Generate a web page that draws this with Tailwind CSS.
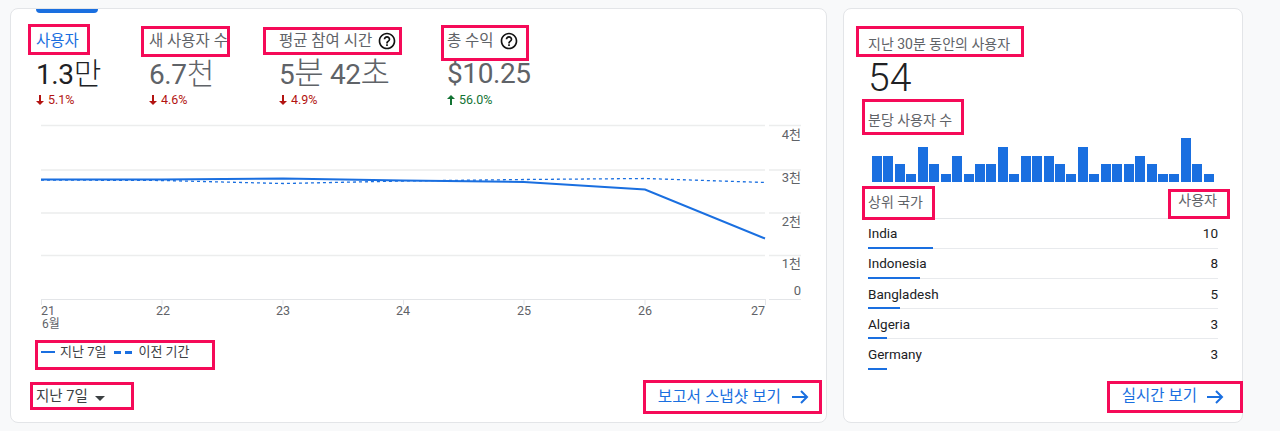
<!DOCTYPE html>
<html lang="ko">
<head>
  <meta charset="UTF-8">
  <meta name="viewport" content="width=device-width, initial-scale=1.0">
  <title>Analytics</title>
  <script src="https://cdn.jsdelivr.net/npm/@tailwindcss/browser@4"></script>
</head>
<body class="relative w-[1280px] h-[431px] overflow-hidden bg-[#f8f9fa] text-[#5f6368] font-['Roboto','Noto_Sans_CJK_KR',sans-serif]">
  <div class="flex items-start gap-4 pl-[10px] pt-2">

    <!-- Overview card -->
    <section class="relative w-[817px] h-[415px] bg-white border border-[#e3e5e8] rounded-lg">
      <div class="absolute left-[25px] top-0 w-[62px] h-1 bg-[#1a6fe0] rounded-b"></div>

      <!-- Metrics -->
      <div class="flex pl-[25px] pt-[22px]">
        <div class="w-[113px]">
          <div class="h-5 text-[15.5px] leading-5 text-[#1a6fe0]">사용자</div>
          <div class="h-[41px] pt-[2px] text-[28px] leading-[41px] tracking-[-0.4px] text-[#202124]">1.3<span class="text-[30px] font-light">만</span></div>
          <div class="flex items-center gap-1 text-[12.5px] leading-4 text-[#b31412]">
            <svg class="w-2 h-[10px]" viewBox="0 0 8 10"><path d="M3 0h2v6h3l-4 4-4-4h3z" fill="#b31412"/></svg>5.1%
          </div>
        </div>
        <div class="w-[130px]">
          <div class="h-5 text-[15.5px] leading-5">새 사용자 수</div>
          <div class="h-[41px] pt-[2px] text-[28px] leading-[41px] tracking-[-0.4px]">6.7<span class="text-[30px] font-light">천</span></div>
          <div class="flex items-center gap-1 text-[12.5px] leading-4 text-[#b31412]">
            <svg class="w-2 h-[10px]" viewBox="0 0 8 10"><path d="M3 0h2v6h3l-4 4-4-4h3z" fill="#b31412"/></svg>4.6%
          </div>
        </div>
        <div class="w-[168px]">
          <div class="flex items-center gap-[5px] h-5 text-[15.5px] leading-5">평균 참여 시간
            <svg class="w-5 h-5" viewBox="0 0 24 24"><path d="M11 18h2v-2h-2v2zm1-16C6.48 2 2 6.48 2 12s4.48 10 10 10 10-4.48 10-10S17.52 2 12 2zm0 18c-4.41 0-8-3.59-8-8s3.59-8 8-8 8 3.59 8 8-3.59 8-8 8zm0-14c-2.21 0-4 1.79-4 4h2c0-1.1.9-2 2-2s2 .9 2 2c0 2-3 1.75-3 5h2c0-2.25 3-2.5 3-5 0-2.21-1.79-4-4-4z" fill="#111"/></svg>
          </div>
          <div class="h-[41px] pt-[2px] text-[28px] leading-[41px] tracking-[-0.4px]">5<span class="text-[32px] font-light">분</span> 42<span class="text-[32px] font-light">초</span></div>
          <div class="flex items-center gap-1 text-[12.5px] leading-4 text-[#b31412]">
            <svg class="w-2 h-[10px]" viewBox="0 0 8 10"><path d="M3 0h2v6h3l-4 4-4-4h3z" fill="#b31412"/></svg>4.9%
          </div>
        </div>
        <div>
          <div class="flex items-center gap-[5px] h-5 text-[15.5px] leading-5">총 수익
            <svg class="w-5 h-5" viewBox="0 0 24 24"><path d="M11 18h2v-2h-2v2zm1-16C6.48 2 2 6.48 2 12s4.48 10 10 10 10-4.48 10-10S17.52 2 12 2zm0 18c-4.41 0-8-3.59-8-8s3.59-8 8-8 8 3.59 8 8-3.59 8-8 8zm0-14c-2.21 0-4 1.79-4 4h2c0-1.1.9-2 2-2s2 .9 2 2c0 2-3 1.75-3 5h2c0-2.25 3-2.5 3-5 0-2.21-1.79-4-4-4z" fill="#111"/></svg>
          </div>
          <div class="h-[41px] pt-[2px] text-[28px] leading-[41px] tracking-[-0.4px]">$10.25</div>
          <div class="flex items-center gap-1 text-[12.5px] leading-4 text-[#137333]">
            <svg class="w-2 h-[10px]" viewBox="0 0 8 10"><path d="M3 10h2V4h3L4 0 0 4h3z" fill="#137333"/></svg>56.0%
          </div>
        </div>
      </div>

      <!-- Chart: viewBox uses page coordinates -->
      <svg class="block mt-[12px]" width="815" height="212" viewBox="11 120 815 212" font-family="Roboto, 'Noto Sans CJK KR', sans-serif">
        <g stroke="#eceded" stroke-width="1.5" fill="none">
          <path d="M41 125.500H765M769 125.500H801"/>
          <path d="M41 170H765M769 170H801"/>
          <path d="M41 213H765M769 213H801"/>
          <path d="M41 255.500H765M769 255.500H801"/>
        </g>
        <path d="M41 299.500H765M769 299.500H801M41.500 299v6M162 299v6M283 299v6M403.500 299v6M524 299v6M645 299v6M765.500 299v6" stroke="#e3e5e8" fill="none"/>
        <path d="M41 180 L162 180.500 L283 183.500 L403 181 L524 179.500 L645 178.500 L765 182.500" stroke="#1a6fe0" stroke-width="1.300" stroke-dasharray="3 3" fill="none"/>
        <path d="M41 179.500 L162 179.500 L283 178.500 L403 180.500 L524 182 L645 189.500 L765 238.500" stroke="#1a6fe0" stroke-width="2" fill="none"/>
        <g fill="#5f6368" font-size="13" text-anchor="end">
          <text x="801" y="139">4천</text>
          <text x="801" y="182">3천</text>
          <text x="801" y="226">2천</text>
          <text x="801" y="268">1천</text>
          <text x="801" y="295">0</text>
        </g>
        <g fill="#5f6368" font-size="12.500" text-anchor="middle">
          <text x="48" y="315">21</text>
          <text x="163" y="315">22</text>
          <text x="283" y="315">23</text>
          <text x="403" y="315">24</text>
          <text x="524" y="315">25</text>
          <text x="645" y="315">26</text>
          <text x="758" y="315">27</text>
          <text x="51" y="328" font-size="12">6월</text>
        </g>
      </svg>

      <!-- Legend -->
      <div class="flex items-center gap-[5px] pl-[30px] mt-[12px] h-4 text-[13px] text-[#3c4043]">
        <span class="w-[14px] h-[2px] bg-[#1a6fe0]"></span>
        <span class="mr-[3px]">지난 7일</span>
        <span class="w-[7px] h-[3px] bg-[#1a6fe0]"></span>
        <span class="w-[7px] h-[3px] -ml-[1px] mr-[1px] bg-[#1a6fe0]"></span>
        <span>이전 기간</span>
      </div>

      <!-- Footer -->
      <div class="flex items-center justify-between pl-[25px] pr-[17px] mt-[25px]">
        <div class="flex items-center gap-[7px] text-[14.5px] text-[#3c4043]">지난 7일
          <span class="w-0 h-0 mt-[3px] border-x-[5px] border-t-[5px] border-x-transparent border-t-[#3c4043]"></span>
        </div>
        <div class="flex items-center gap-[11px] text-[15.7px] text-[#1a6fe0]">보고서 스냅샷 보기
          <svg class="w-[17px] h-[16px]" viewBox="0 0 17 16"><path d="M0 8H15M9 2l6 6-6 6" stroke="#1a6fe0" stroke-width="2" fill="none"/></svg>
        </div>
      </div>
    </section>

    <!-- Realtime card -->
    <section class="w-[400px] h-[415px] bg-white border border-[#e3e5e8] rounded-lg px-6 pt-[27px]">
      <div class="h-4 text-[14px] leading-4 text-[#5f6368]">지난 30분 동안의 사용자</div>
      <div class="h-[48px] mt-[2px] text-[39px] leading-[48px] font-light text-[#202124]">54</div>
      <div class="h-4 mt-[10px] text-[14px] leading-4">분당 사용자 수</div>

      <!-- Per-minute bars -->
      <div class="flex items-end gap-[1.44px] h-[44px] mt-[10px] pl-[4px]">
        <div class="w-[10px] h-[26px] bg-[#1a6fe0]"></div>
        <div class="w-[10px] h-[26px] bg-[#1a6fe0]"></div>
        <div class="w-[10px] h-[18px] bg-[#1a6fe0]"></div>
        <div class="w-[10px] h-[8px] bg-[#1a6fe0]"></div>
        <div class="w-[10px] h-[35px] bg-[#1a6fe0]"></div>
        <div class="w-[10px] h-[18px] bg-[#1a6fe0]"></div>
        <div class="w-[10px] h-[8px] bg-[#1a6fe0]"></div>
        <div class="w-[10px] h-[26px] bg-[#1a6fe0]"></div>
        <div class="w-[10px] h-[8px] bg-[#1a6fe0]"></div>
        <div class="w-[10px] h-[18px] bg-[#1a6fe0]"></div>
        <div class="w-[10px] h-[18px] bg-[#1a6fe0]"></div>
        <div class="w-[10px] h-[35px] bg-[#1a6fe0]"></div>
        <div class="w-[10px] h-[8px] bg-[#1a6fe0]"></div>
        <div class="w-[10px] h-[26px] bg-[#1a6fe0]"></div>
        <div class="w-[10px] h-[26px] bg-[#1a6fe0]"></div>
        <div class="w-[10px] h-[26px] bg-[#1a6fe0]"></div>
        <div class="w-[10px] h-[18px] bg-[#1a6fe0]"></div>
        <div class="w-[10px] h-[8px] bg-[#1a6fe0]"></div>
        <div class="w-[10px] h-[35px] bg-[#1a6fe0]"></div>
        <div class="w-[10px] h-[8px] bg-[#1a6fe0]"></div>
        <div class="w-[10px] h-[18px] bg-[#1a6fe0]"></div>
        <div class="w-[10px] h-[18px] bg-[#1a6fe0]"></div>
        <div class="w-[10px] h-[18px] bg-[#1a6fe0]"></div>
        <div class="w-[10px] h-[26px] bg-[#1a6fe0]"></div>
        <div class="w-[10px] h-[18px] bg-[#1a6fe0]"></div>
        <div class="w-[10px] h-[8px] bg-[#1a6fe0]"></div>
        <div class="w-[10px] h-[8px] bg-[#1a6fe0]"></div>
        <div class="w-[10px] h-[44px] bg-[#1a6fe0]"></div>
        <div class="w-[10px] h-[18px] bg-[#1a6fe0]"></div>
        <div class="w-[10px] h-[8px] bg-[#1a6fe0]"></div>
      </div>

      <!-- Top countries -->
      <div class="w-[350px]">
        <div class="flex justify-between items-center h-[37px] pt-[4px] border-b border-[#e3e5e8] text-[14px]">
          <span>상위 국가</span><span class="pr-[1px] pb-[3px]">사용자</span>
        </div>
        <div class="relative h-[30px] border-b border-[#e8eaed] flex justify-between items-center text-[13.5px] text-[#202124]">
          <span>India</span><span>10</span>
          <span class="absolute left-0 -bottom-px w-[65px] h-[2px] bg-[#1a6fe0]"></span>
        </div>
        <div class="relative h-[30px] border-b border-[#e8eaed] flex justify-between items-center text-[13.5px] text-[#202124]">
          <span>Indonesia</span><span>8</span>
          <span class="absolute left-0 -bottom-px w-[52px] h-[2px] bg-[#1a6fe0]"></span>
        </div>
        <div class="relative h-[30px] border-b border-[#e8eaed] flex justify-between items-center text-[13.5px] text-[#202124] pt-[1px]">
          <span>Bangladesh</span><span>5</span>
          <span class="absolute left-0 -bottom-px w-[32px] h-[2px] bg-[#1a6fe0]"></span>
        </div>
        <div class="relative h-[30px] border-b border-[#e8eaed] flex justify-between items-center text-[13.5px] text-[#202124] pt-[1px]">
          <span>Algeria</span><span>3</span>
          <span class="absolute left-0 -bottom-px w-[19px] h-[2px] bg-[#1a6fe0]"></span>
        </div>
        <div class="relative h-[30px] flex justify-between items-center text-[13.5px] text-[#202124]">
          <span>Germany</span><span>3</span>
          <span class="absolute left-0 -bottom-px w-[19px] h-[2px] bg-[#1a6fe0]"></span>
        </div>
      </div>

      <div class="flex items-center justify-end gap-[10px] -mr-[6px] mt-[16px] text-[15.5px] text-[#1a6fe0]">실시간 보기
        <svg class="w-[17px] h-[16px]" viewBox="0 0 17 16"><path d="M0 8H15M9 2l6 6-6 6" stroke="#1a6fe0" stroke-width="2" fill="none"/></svg>
      </div>
    </section>
  </div>

  <!-- Annotation boxes drawn over the screenshot -->
  <div class="absolute left-[28px] top-[24px] w-[62px] h-[31px] border-[3px] border-[#f50a58]"></div>
  <div class="absolute left-[141px] top-[26px] w-[89px] h-[31px] border-[3px] border-[#f50a58]"></div>
  <div class="absolute left-[263px] top-[27px] w-[139px] h-[28px] border-[3px] border-[#f50a58]"></div>
  <div class="absolute left-[441px] top-[25px] w-[88px] h-[36px] border-[3px] border-[#f50a58]"></div>
  <div class="absolute left-[35px] top-[340px] w-[180px] h-[30px] border-[3px] border-[#f50a58]"></div>
  <div class="absolute left-[30px] top-[382px] w-[104px] h-[28px] border-[3px] border-[#f50a58]"></div>
  <div class="absolute left-[643px] top-[380px] w-[179px] h-[34px] border-[3px] border-[#f50a58]"></div>
  <div class="absolute left-[856px] top-[26px] w-[168px] h-[31px] border-[3px] border-[#f50a58]"></div>
  <div class="absolute left-[862px] top-[99px] w-[102px] h-[36px] border-[3px] border-[#f50a58]"></div>
  <div class="absolute left-[862px] top-[186px] w-[73px] h-[34px] border-[3px] border-[#f50a58]"></div>
  <div class="absolute left-[1168px] top-[189px] w-[62px] h-[30px] border-[3px] border-[#f50a58]"></div>
  <div class="absolute left-[1107px] top-[381px] w-[136px] h-[32px] border-[3px] border-[#f50a58]"></div>
</body>
</html>
